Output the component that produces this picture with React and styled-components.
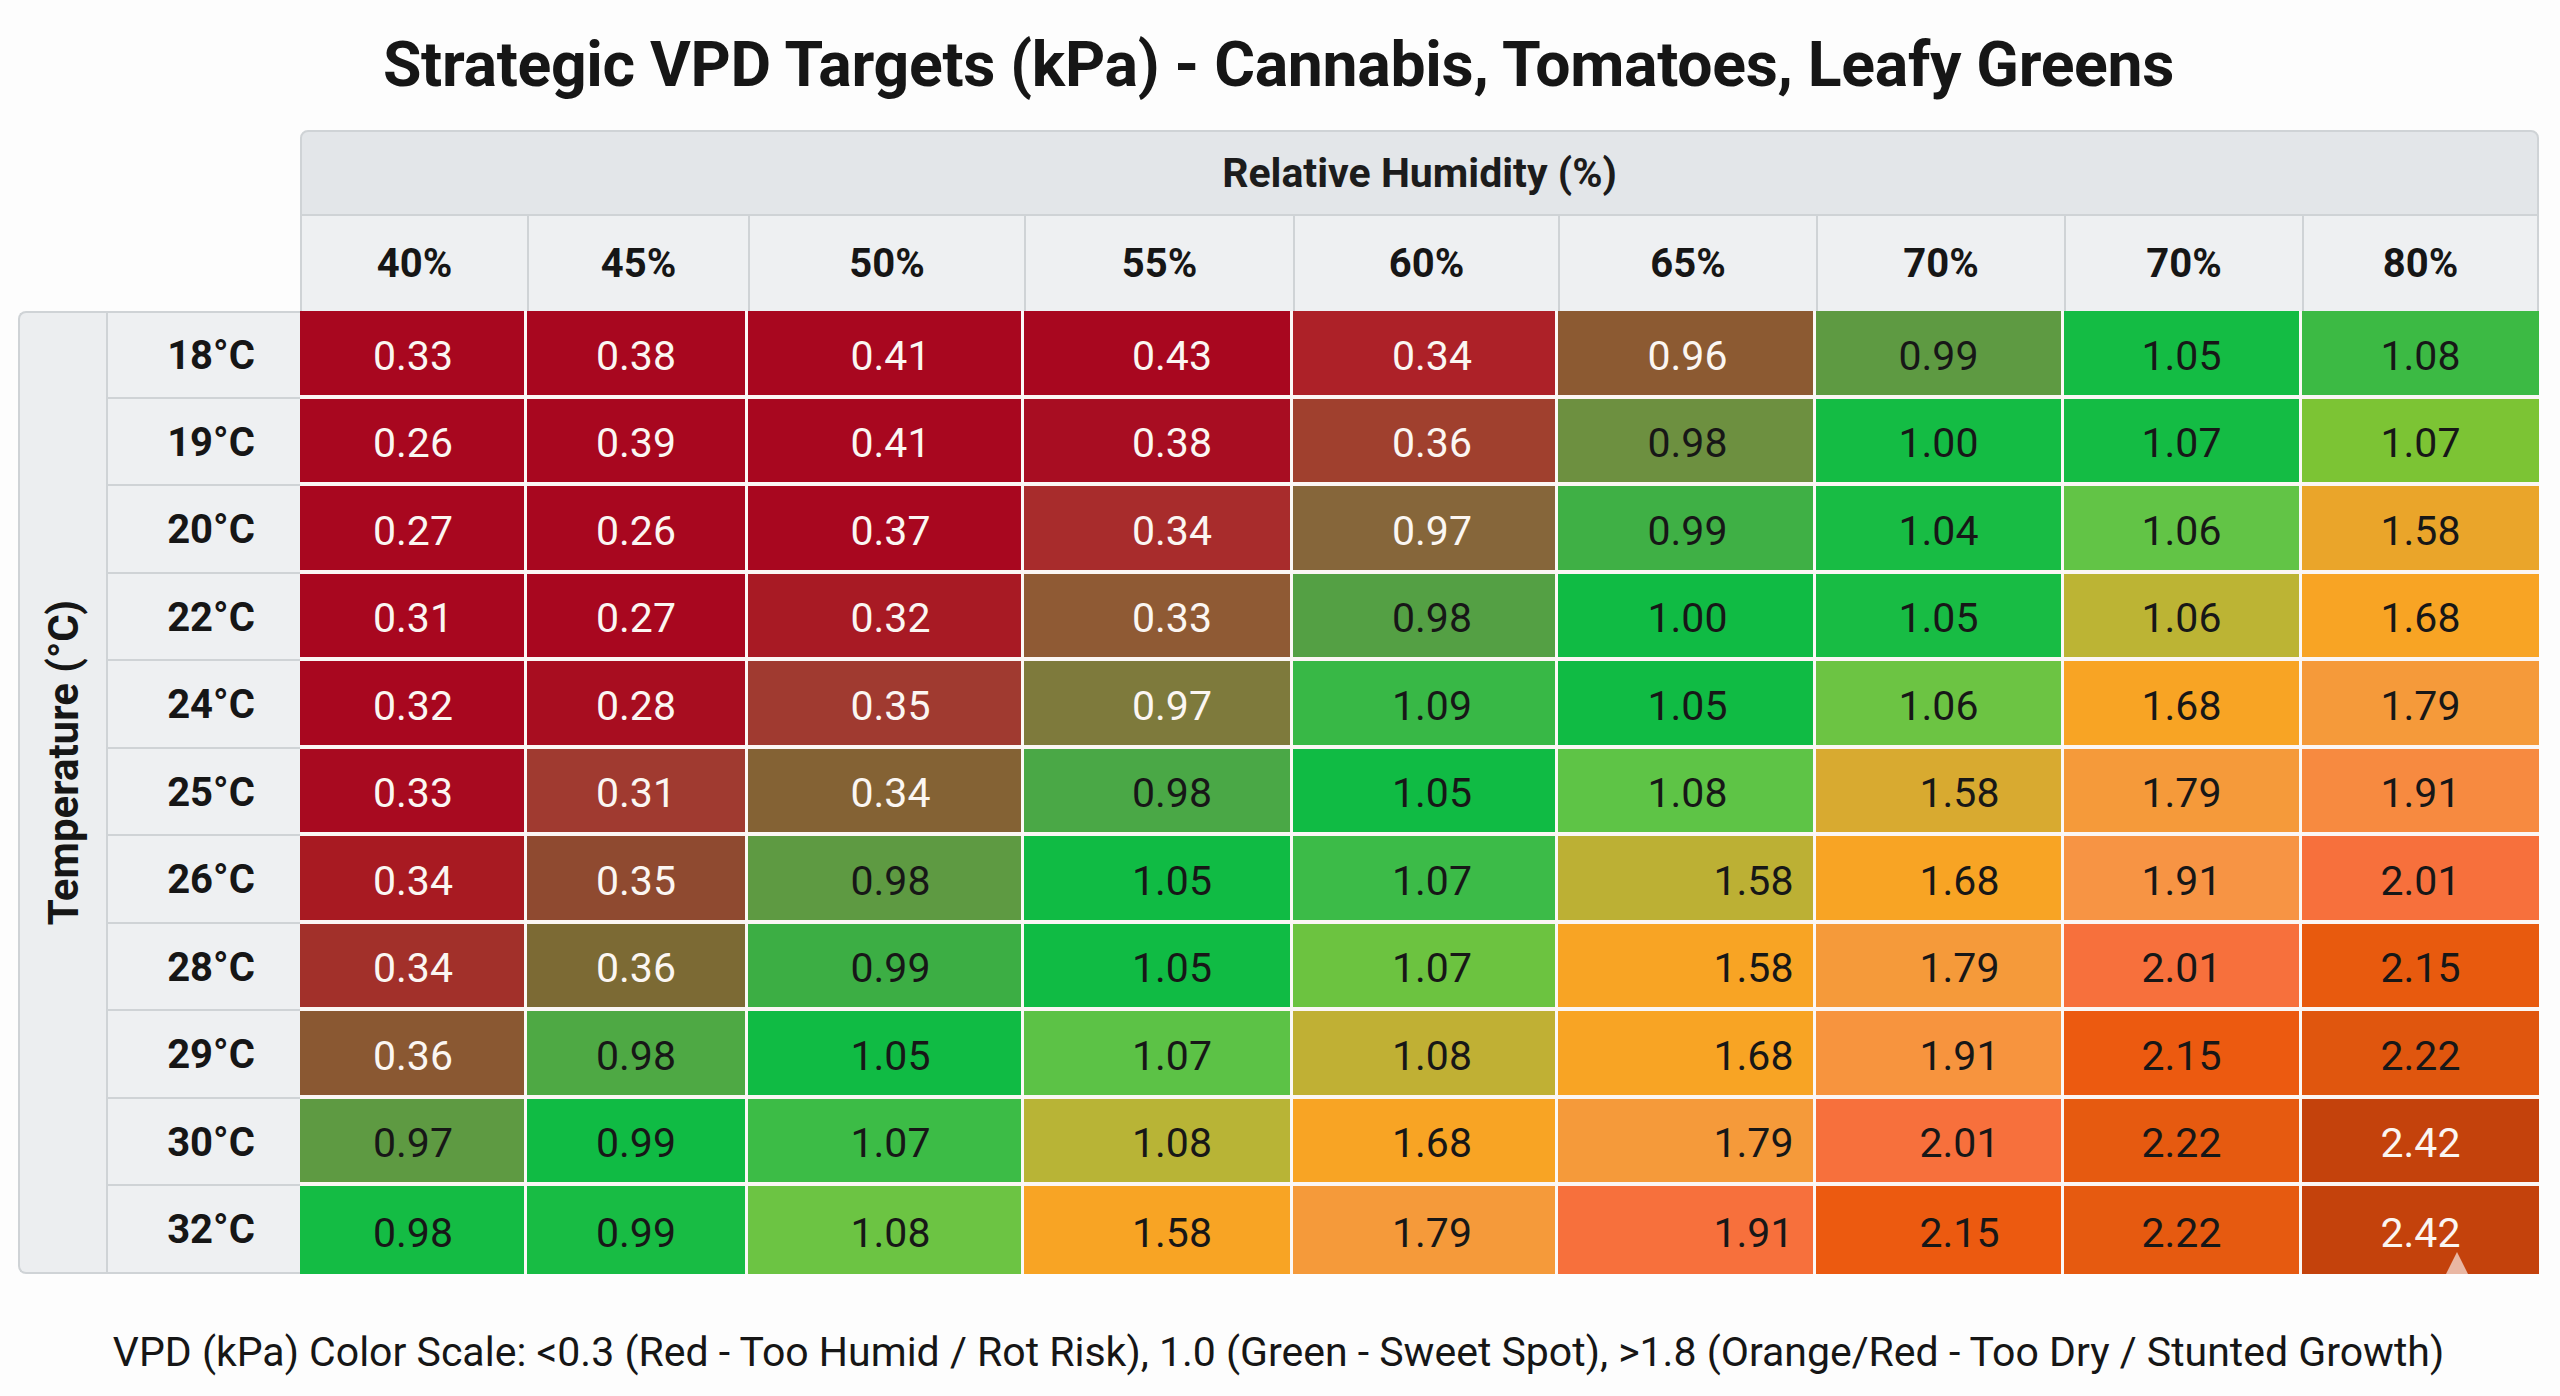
import React from 'react';
import styled, { createGlobalStyle } from 'styled-components';

const GlobalStyle = createGlobalStyle`
    body {
        margin: 0;
        background: #fdfdfd;
        font-family: Roboto, "Liberation Sans", sans-serif;
        color: #1a1a1a;
    }
`

const temps = ['18°C', '19°C', '20°C', '22°C', '24°C', '25°C', '26°C', '28°C', '29°C', '30°C', '32°C'];
const hums = ['40%', '45%', '50%', '55%', '60%', '65%', '70%', '70%', '80%'];

// value colour text(w = white, d = dark)
const rows = [
    '0.33 a8071f w|0.38 a8071f w|0.41 a8071f w|0.43 a8071f w|0.34 ad2128 w|0.96 8c5a32 w|0.99 5e9a42 d|1.05 14bc44 d|1.08 3cba44 d',
    '0.26 a8071f w|0.39 a8071f w|0.41 a8071f w|0.38 a80d22 w|0.36 a0402e w|0.98 6d9040 d|1.00 14bc44 d|1.07 14bc44 d|1.07 7cc434 d',
    '0.27 a8071f w|0.26 a8071f w|0.37 a8071f w|0.34 a82c2c w|0.97 86663a w|0.99 3fb045 d|1.04 18bc44 d|1.06 62c446 d|1.58 eaa52a d',
    '0.31 a8071f w|0.27 a8071f w|0.32 a81a24 w|0.33 8f5a34 w|0.98 54a044 d|1.00 10bb44 d|1.05 18bc44 d|1.06 bcb434 d|1.68 f8a424 d',
    '0.32 a8071f w|0.28 a80d20 w|0.35 a03a30 w|0.97 7e7a3c w|1.09 38b846 d|1.05 10bb44 d|1.06 6cc443 d|1.68 f8a424 d|1.79 f59a3a d',
    '0.33 a80a20 w|0.31 a03a30 w|0.34 846234 w|0.98 4aa846 d|1.05 10bb44 d|1.08 5ec446 d|1.58 d8aa30 d|1.79 f59a3a d|1.91 f78a40 d',
    '0.34 a81a22 w|0.35 8f4a30 w|0.98 5e9a42 d|1.05 10bb44 d|1.07 3cbb48 d|1.58 bcb034 d|1.68 f8a424 d|1.91 f79444 d|2.01 f7703c d',
    '0.34 a2302a w|0.36 7c6a34 w|0.99 3cae44 d|1.05 10bb44 d|1.07 6cc340 d|1.58 f8a424 d|1.79 f59a3a d|2.01 f7703c d|2.15 e85a0e d',
    '0.36 8a5832 w|0.98 4ea944 d|1.05 10bb44 d|1.07 5cc246 d|1.08 c0b034 d|1.68 f8a424 d|1.91 f7943e d|2.15 ec5a10 d|2.22 e0560e d',
    '0.97 5e9a42 d|0.99 10bb44 d|1.07 3cbc46 d|1.08 b8b436 d|1.68 f8a424 d|1.79 f59a3a d|2.01 f7703c d|2.22 e65a10 d|2.42 c4420c w',
    '0.98 14bc44 d|0.99 18bc44 d|1.08 6cc443 d|1.58 f8a424 d|1.79 f59a3a d|1.91 f7703c d|2.15 ec5a10 d|2.22 e65a10 d|2.42 c4420c w',
].map((r) => r.split('|').map((c) => {
    const [value, color, tone] = c.split(' ');
    return { value, color: '#' + color, light: tone === 'w' };
}));

// the numbers do not sit dead centre in every column
const colShift = [1, 0, 6, 15, 8, 2, 0, 0, 0];
const shiftOf = (r, c) => {
    if (c === 5 && r >= 6) return 68;
    if (c === 6 && r >= 5) return 21;
    return colShift[c];
};

const line = '#cfd3d6';

function App() {
    return (
        <Page>
            <GlobalStyle />
            <Title>Strategic VPD Targets (kPa) - Cannabis, Tomatoes, Leafy Greens</Title>
            <Chart>
                <Corner />
                <Banner>Relative Humidity (%)</Banner>
                {hums.map((h, i) => (
                    <ColHead key={'h' + i} $last={i === hums.length - 1}>{h}</ColHead>
                ))}
                <Axis>
                    <AxisText>Temperature (°C)</AxisText>
                </Axis>
                {rows.map((row, r) => (
                    <React.Fragment key={'r' + r}>
                        <TempLabel $first={r === 0} $last={r === rows.length - 1}>{temps[r]}</TempLabel>
                        {row.map((cell, c) => (
                            <Cell
                                key={c}
                                $bg={cell.color}
                                $light={cell.light}
                                $shift={shiftOf(r, c)}
                                $lastCol={c === row.length - 1}
                                $lastRow={r === rows.length - 1}
                            >
                                {cell.value}
                                {r === rows.length - 1 && c === row.length - 1 && <Notch />}
                            </Cell>
                        ))}
                    </React.Fragment>
                ))}
            </Chart>
            <Footer>
                VPD (kPa) Color Scale: &lt;0.3 (Red - Too Humid / Rot Risk), 1.0 (Green - Sweet Spot), &gt;1.8 (Orange/Red - Too Dry / Stunted Growth)
            </Footer>
        </Page>
    )
}

export default App

const Page = styled.div`
    width: 2560px;
    height: 1396px;
    box-sizing: border-box;
    padding: 0 21px 0 18px;
    display: flex;
    flex-direction: column;
    overflow: hidden;
`

const Title = styled.h1`
    margin: 0;
    height: 131px;
    display: flex;
    align-items: center;
    justify-content: center;
    padding-bottom: 2px;
    box-sizing: border-box;
    font-size: 62.5px;
    font-weight: 700;
    letter-spacing: -0.3px;
    color: #161616;
`

const Chart = styled.div`
    display: grid;
    grid-template-columns: 88px 194px 227px 221px 276px 269px 265px 258px 248px 238px 237px;
    grid-template-rows: 86px 95px repeat(11, 87.5px);
`

const Corner = styled.div`
    grid-column: 1 / 3;
    grid-row: 1 / 3;
`

const Banner = styled.div`
    grid-column: 3 / -1;
    grid-row: 1;
    background: #e3e6e9;
    border: 2px solid ${line};
    border-radius: 8px 8px 0 0;
    display: flex;
    align-items: center;
    justify-content: center;
    font-size: 41px;
    font-weight: 700;
    color: #1c1c1c;
`

const ColHead = styled.div`
    background: #eef0f2;
    border-left: 2px solid ${line};
    border-right: ${(p) => (p.$last ? `2px solid ${line}` : 'none')};
    display: flex;
    align-items: center;
    justify-content: center;
    font-size: 40px;
    font-weight: 700;
    color: #161616;
`

const Axis = styled.div`
    grid-column: 1;
    grid-row: 3 / 14;
    background: #eceef0;
    border: 2px solid ${line};
    border-right: none;
    border-radius: 8px 0 0 8px;
    display: flex;
    align-items: center;
    justify-content: center;
    padding-bottom: 60px;
`

const AxisText = styled.span`
    writing-mode: vertical-rl;
    transform: rotate(180deg);
    font-size: 42px;
    font-weight: 700;
    color: #161616;
    white-space: nowrap;
`

const TempLabel = styled.div`
    grid-column: 2;
    background: #eef0f2;
    border-left: 2px solid ${line};
    border-top: ${(p) => (p.$first ? `2px solid ${line}` : 'none')};
    border-bottom: 2px solid ${line};
    display: flex;
    align-items: center;
    justify-content: center;
    padding-left: 14px;
    padding-top: 2px;
    font-size: 40px;
    font-weight: 700;
    color: #161616;
`

const Cell = styled.div`
    position: relative;
    background: ${(p) => p.$bg};
    color: ${(p) => (p.$light ? '#fbf6f2' : '#171717')};
    border-right: ${(p) => (p.$lastCol ? 'none' : '3px solid #fbf8f6')};
    border-bottom: ${(p) => (p.$lastRow ? 'none' : '4px solid #fbf6f4')};
    display: flex;
    align-items: center;
    justify-content: center;
    padding-left: ${(p) => p.$shift * 2}px;
    padding-top: 6px;
    font-size: 41px;
    font-weight: 400;
`

const Notch = styled.span`
    position: absolute;
    left: 144px;
    bottom: 0;
    width: 0;
    height: 0;
    border-left: 11px solid transparent;
    border-right: 11px solid transparent;
    border-bottom: 22px solid #e9b7a3;
`

const Footer = styled.div`
    height: 123px;
    box-sizing: border-box;
    padding-top: 34px;
    display: flex;
    align-items: center;
    justify-content: center;
    font-size: 41px;
    color: #161616;
`
